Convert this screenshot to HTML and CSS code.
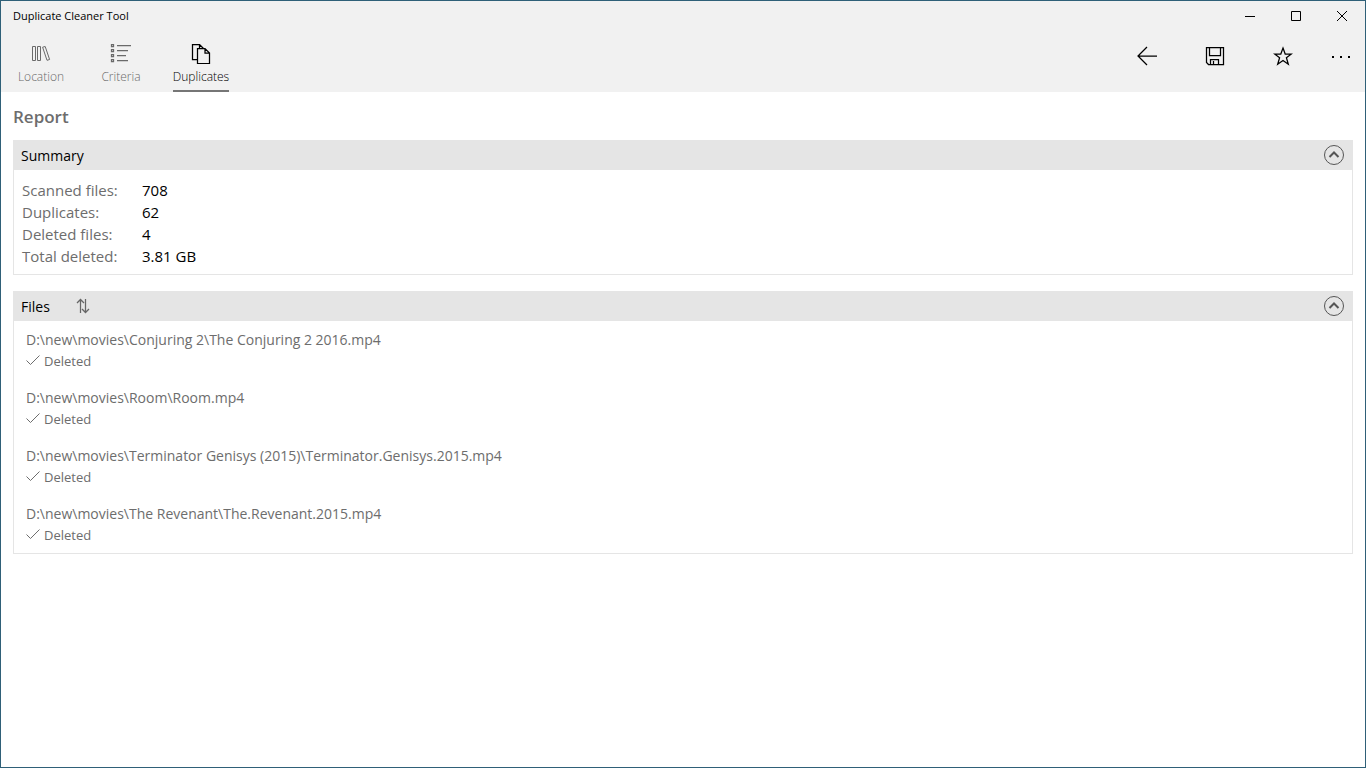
FILE: index.html
```html
<!DOCTYPE html>
<html lang="en">
<head>
<meta charset="utf-8">
<title>Duplicate Cleaner Tool</title>
<link rel="stylesheet" href="styles.css">
</head>
<body>
<div class="window">
  <header class="chrome">
    <div class="titlebar">
      <span class="app-name">Duplicate Cleaner Tool</span>
      <div class="caption-buttons">
        <button class="caption-button" aria-label="Minimize"><svg width="10" height="10" viewBox="0 0 10 10"><path d="M0 5.500H10"/></svg></button>
        <button class="caption-button" aria-label="Maximize"><svg width="10" height="10" viewBox="0 0 10 10"><path d="M.5.500H9.500V9.500H.5Z"/></svg></button>
        <button class="caption-button" aria-label="Close"><svg width="10" height="10" viewBox="0 0 10 10"><path d="M0 0L10 10M10 0L0 10"/></svg></button>
      </div>
    </div>
    <div class="toolbar">
      <nav class="tabs">
        <button class="tab">
          <svg width="20" height="20" viewBox="0 0 20 20"><path d="M1.500 2.500H4.500V16.500H1.500ZM6.500 2.500H9.500V16.500H6.500ZM11.600 3.200L14.200 2.500L18.600 15.500L16 16.300Z"/></svg>
          <span>Location</span>
        </button>
        <button class="tab">
          <svg width="22" height="20" viewBox="0 0 22 20"><path class="bold" d="M1.500.500H3.500V2.500H1.500ZM1.500 5.500H3.500V7.500H1.500ZM1.500 10.500H3.500V12.500H1.500ZM1.500 15.500H3.500V17.500H1.500Z"/><path class="bold" d="M7 1.500H21M7 6.500H18M7 11.500H16M7 16.500H18"/></svg>
          <span>Criteria</span>
        </button>
        <button class="tab active" aria-current="page">
          <svg width="20" height="20" viewBox="0 0 20 20"><path class="bold" d="M6.500 15.500H1.500V.5H8.500L12.500 4.500M8.500.5V4.500M6.500 4.500H14L18.500 9V19.500H6.500ZM14 4.500V9H18.500"/></svg>
          <span>Duplicates</span>
        </button>
      </nav>
      <div class="commands">
        <button class="command" aria-label="Back"><svg width="20" height="20" viewBox="0 0 20 20"><path class="bold" d="M10 1L1 10L10 19M1 10H20"/></svg></button>
        <button class="command" aria-label="Save"><svg width="20" height="20" viewBox="0 0 20 20"><path class="bold" d="M1.500 1.500H18.500V18.500H3.500L1.500 16.500ZM4.500 1.500V9.500H15.500V1.500M5.500 18.500V13.500H13.500V18.500M8.500 15V18.500"/></svg></button>
        <button class="command" aria-label="Favorite"><svg width="20" height="20" viewBox="0 0 20 20"><path class="bold" d="M10 2L12.200 8H18.400L13.400 11.800L15.300 18.200L10 14.400L4.700 18.200L6.600 11.800L1.600 8H7.800Z"/></svg></button>
        <button class="command more" aria-label="More"><svg width="20" height="20" viewBox="0 0 20 20"><path class="dots" d="M1 10H3V12H1ZM9 10H11V12H9ZM17 10H19V12H17Z"/></svg></button>
      </div>
    </div>
  </header>
  <main class="content">
    <h1 class="page-title">Report</h1>
    <section class="panel">
      <div class="panel-header">
        <h2 class="panel-title">Summary</h2>
        <button class="collapse" aria-label="Collapse summary"><svg width="22" height="22" viewBox="0 0 22 22"><circle cx="11" cy="11" r="9.500"/><path class="chevron" d="M6.500 13L11 8.500L15.500 13"/></svg></button>
      </div>
      <dl class="summary">
        <dt>Scanned files:</dt><dd>708</dd>
        <dt>Duplicates:</dt><dd>62</dd>
        <dt>Deleted files:</dt><dd>4</dd>
        <dt>Total deleted:</dt><dd>3.81 GB</dd>
      </dl>
    </section>
    <section class="panel">
      <div class="panel-header">
        <h2 class="panel-title">Files</h2>
        <button class="sort" aria-label="Sort"><svg width="14" height="16" viewBox="0 0 14 16"><path class="bold" d="M4.500 15V1.500M1 5L4.500 1.500L8 5M9.500 1V14.500M6 11L9.500 14.500L13 11"/></svg></button>
        <button class="collapse" aria-label="Collapse files"><svg width="22" height="22" viewBox="0 0 22 22"><circle cx="11" cy="11" r="9.500"/><path class="chevron" d="M6.500 13L11 8.500L15.500 13"/></svg></button>
      </div>
      <ul class="files">
        <li class="file">
          <div class="path">D:\new\movies\Conjuring 2\The Conjuring 2 2016.mp4</div>
          <div class="status"><svg width="14" height="12" viewBox="0 0 14 12"><path d="M.5 5.500L4.500 9.500L13.500.500"/></svg>Deleted</div>
        </li>
        <li class="file">
          <div class="path">D:\new\movies\Room\Room.mp4</div>
          <div class="status"><svg width="14" height="12" viewBox="0 0 14 12"><path d="M.5 5.500L4.500 9.500L13.500.500"/></svg>Deleted</div>
        </li>
        <li class="file">
          <div class="path">D:\new\movies\Terminator Genisys (2015)\Terminator.Genisys.2015.mp4</div>
          <div class="status"><svg width="14" height="12" viewBox="0 0 14 12"><path d="M.5 5.500L4.500 9.500L13.500.500"/></svg>Deleted</div>
        </li>
        <li class="file">
          <div class="path">D:\new\movies\The Revenant\The.Revenant.2015.mp4</div>
          <div class="status"><svg width="14" height="12" viewBox="0 0 14 12"><path d="M.5 5.500L4.500 9.500L13.500.500"/></svg>Deleted</div>
        </li>
      </ul>
    </section>
  </main>
</div>
</body>
</html>
```
FILE: styles.css
```css
* { box-sizing: border-box; }
body { margin: 0; font-family: "Open Sans", "Noto Sans", sans-serif; font-size: 15px; line-height: 22px; color: #000; background: #fff; }
button { display: flex; align-items: center; justify-content: center; margin: 0; padding: 0; border: 0; background: none; color: inherit; font: inherit; }
svg { display: block; flex: none; fill: none; stroke: currentColor; stroke-width: 1; }
.bold { stroke-width: 1.25; }
.chevron { stroke-width: 2; }
.window { min-height: 100vh; border: 1px solid #2f6078; }
.chrome { background: #f1f1f1; }
.titlebar { display: flex; justify-content: space-between; align-items: center; height: 30px; padding-left: 12px; }
.app-name { font-size: 11px; }
.caption-buttons { display: flex; height: 100%; }
.caption-button { width: 46px; }
.toolbar { display: flex; justify-content: space-between; height: 61px; }
.tabs { display: flex; gap: 24px; padding-left: 12px; }
.tab { flex-direction: column; justify-content: flex-start; gap: 4px; width: 56px; padding-top: 13px; border-bottom: 2px solid transparent; color: #6a6a6a; font-size: 12px; line-height: 18px; font-weight: 300; }
.tab.active { border-bottom-color: #767676; color: #000; }
.commands { display: flex; padding: 1px 0 12px; }
.command { width: 68px; }
.command.more { width: 48px; }
.dots { fill: currentColor; stroke: none; }
.content { display: flex; flex-direction: column; gap: 16px; padding: 12px; }
.page-title { margin: 2px 0 -4px; font-size: 17px; line-height: 22px; font-weight: 600; color: #6d6d6d; }
.panel { border: 1px solid #e5e5e5; border-top: 0; }
.panel-header { display: flex; align-items: center; height: 30px; padding: 0 7px; background: #e5e5e5; }
.panel-title { margin: 0; padding-top: 2px; font-size: 14px; line-height: 22px; font-weight: 400; }
.sort { margin-left: 26px; color: #666; }
.collapse { margin-left: auto; color: #555; }
.summary { display: grid; grid-template-columns: 120px 1fr; margin: 0; padding: 9px 8px 7px; }
.summary dt { color: #6d6d6d; }
.summary dd { margin: 0; }
.files { display: flex; flex-direction: column; gap: 16px; margin: 0; padding: 8px 12px; list-style: none; color: #6d6d6d; }
.path { font-size: 14px; line-height: 22px; }
.status { display: flex; align-items: center; gap: 4px; font-size: 13px; line-height: 20px; }
```
